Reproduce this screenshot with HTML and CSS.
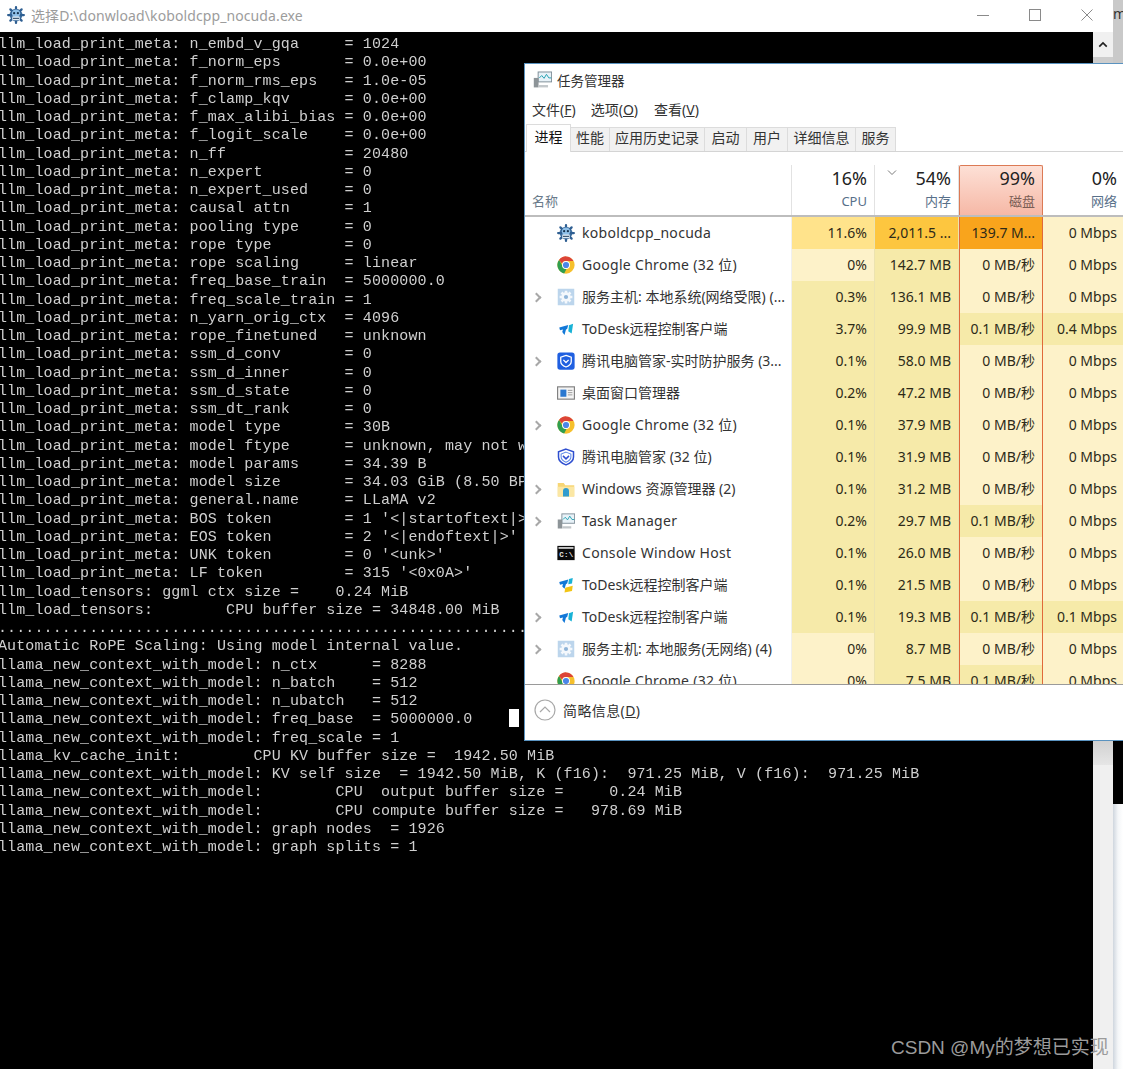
FILE: index.html
```html
<!DOCTYPE html>
<html lang="zh">
<head>
<meta charset="utf-8">
<title>koboldcpp</title>
<link rel="stylesheet" href="styles.css">
</head>
<body>
<svg class="defs" width="0" height="0" aria-hidden="true">
  <symbol id="i-kobold" viewBox="0 0 24 24">
    <circle cx="12" cy="12" r="8.5" fill="#3f6f9f"/>
    <g stroke="#2f5f92" stroke-width="3" stroke-linecap="round"><path d="M12 1.5v21M1.5 12h21M4.5 4.5l15 15M19.500 4.500l-15 15"/></g>
    <circle cx="12" cy="10" r="5.500" fill="#8fc0e8"/>
    <rect x="7" y="14" width="10" height="5" fill="#dfeaf4"/>
    <circle cx="9.500" cy="9.500" r="1.500" fill="#16324f"/><circle cx="14.500" cy="9.500" r="1.500" fill="#16324f"/>
    <path d="M8 16.500h8" stroke="#35506c" stroke-width="1.500"/>
  </symbol>
  <symbol id="i-chrome" viewBox="0 0 24 24">
    <circle cx="12" cy="12" r="11.500" fill="#f6c02c"/>
    <path d="M12 .5A11.500 11.500 0 0 1 22 6.800H12a5.200 5.200 0 0 0-5 3.600L2.700 5.200A11.500 11.500 0 0 1 12 .5z" fill="#dc4437"/>
    <path d="M2.700 5.200 7 12.800a5.200 5.200 0 0 0 5.800 4.300L9.600 23.200A11.500 11.500 0 0 1 2.700 5.200z" fill="#2f9e4f"/>
    <circle cx="12" cy="12" r="5.300" fill="#fff"/>
    <circle cx="12" cy="12" r="4.100" fill="#4a86e8"/>
  </symbol>
  <symbol id="i-gear" viewBox="0 0 24 24">
    <rect x="1" y="1" width="22" height="22" fill="#bcd5ec"/>
    <g stroke="#f4f8fc" stroke-width="3.400"><path d="M12 3.500v17M3.500 12h17M6 6l12 12M18 6 6 18"/></g>
    <circle cx="12" cy="12" r="6.200" fill="#f4f8fc"/>
    <circle cx="12" cy="12" r="2.800" fill="#8fb4d8"/>
  </symbol>
  <symbol id="i-todesk" viewBox="0 0 24 24">
    <path d="M3 10 15 6.500 13.500 12 12 12.500 10 20 7 16 8 12.800 4 13.500z" fill="#1278d8"/>
    <path d="M16 7 21.500 5 19.500 18 15 15z" fill="#18b2d6"/>
  </symbol>
  <symbol id="i-todesk2" viewBox="0 0 24 24">
    <path d="M3 8 15 4.500 13.500 10 12 10.500 10 17 7 14 8 10.800 4 11.500z" fill="#1278d8"/>
    <path d="M16 4 21 2.500 20 10 15 11z" fill="#18b2d6"/>
    <path d="M11 15.500 21 13 20 20 10 22z" fill="#f2c515"/>
  </symbol>
  <symbol id="i-tencent" viewBox="0 0 24 24">
    <rect x="0.500" y="0.500" width="23" height="23" rx="3.500" fill="#1f5fe0"/>
    <path d="M12 4.500 19 7v5.500c0 3.500-3 6-7 7.500-4-1.500-7-4-7-7.500V7z" fill="none" stroke="#fff" stroke-width="1.700"/>
    <path d="M8.500 10.500 12 14l3.500-3.500" fill="none" stroke="#fff" stroke-width="1.800"/>
  </symbol>
  <symbol id="i-shield" viewBox="0 0 24 24">
    <path d="M12 1.500 22 5v7c0 5-4.500 8.500-10 10.500C6.500 20.500 2 17 2 12V5z" fill="#fff" stroke="#2f4fd0" stroke-width="2"/>
    <path d="M12 5.500 18.500 8v4c0 3-3 5.500-6.500 7-3.500-1.500-6.500-4-6.500-7V8z" fill="none" stroke="#5f8be8" stroke-width="1.400"/>
    <path d="M8 10.500l4 4 4-4" fill="none" stroke="#2f4fd0" stroke-width="2"/>
  </symbol>
  <symbol id="i-dwm" viewBox="0 0 24 24">
    <rect x="0.800" y="3.800" width="22.400" height="16.400" fill="#f4f4f4" stroke="#7d7d7d" stroke-width="1.500"/>
    <rect x="4.500" y="7.500" width="8" height="9.500" fill="#2a78d0"/>
    <path d="M14.500 8.500h6M14.500 11.500h6M14.500 14.500h6" stroke="#9a9a9a" stroke-width="1.300"/>
  </symbol>
  <symbol id="i-folder" viewBox="0 0 24 24">
    <path d="M1 4h8l2 3h12v15H1z" fill="#f7d675"/>
    <path d="M1 9h22v13H1z" fill="#fbe7a4"/>
    <path d="M8 22v-7.500a4 4 0 0 1 8 0V22z" fill="#2f9ccf"/>
  </symbol>
  <symbol id="i-task" viewBox="0 0 24 24">
    <rect x="6.500" y="2.500" width="17" height="12.500" fill="#e8f2f8" stroke="#7c8c96" stroke-width="1.200"/>
    <path d="M8 10l3-3 3 3.500 3-5 3 4.500h3" fill="none" stroke="#1f9fb0" stroke-width="1.200"/>
    <rect x="1" y="10" width="6" height="12" fill="#8d9498"/>
    <path d="M7 19h12v3H7z" fill="#c2c7ca"/>
  </symbol>
  <symbol id="i-console" viewBox="0 0 24 24">
    <rect x="0.500" y="2.500" width="23" height="19" fill="#0a0a0a"/>
    <rect x="2" y="4" width="20" height="2.500" fill="#c8c8c8"/>
    <text x="3" y="17" font-family="Liberation Mono, monospace" font-size="10" font-weight="700" fill="#e6e6e6">C:\</text>
  </symbol>
</svg>

<div class="desktop">
  <section class="console-win">
    <header class="titlebar">
      <svg class="title-icon"><use href="#i-kobold"/></svg>
      <span class="title-text">选择D:\donwload\koboldcpp_nocuda.exe</span>
      <div class="controls">
        <svg class="ctl" viewBox="0 0 12 12"><path d="M0 6.500h12" stroke="#8a8a8a" stroke-width="1"/></svg>
        <svg class="ctl" viewBox="0 0 12 12"><rect x=".5" y=".5" width="11" height="11" fill="none" stroke="#8a8a8a"/></svg>
        <svg class="ctl" viewBox="0 0 12 12"><path d="M.5.500l11 11M11.500.500l-11 11" stroke="#8a8a8a"/></svg>
      </div>
    </header>
    <div class="console-body">
<pre class="console">llm_load_print_meta: n_embd_v_gqa     = 1024
llm_load_print_meta: f_norm_eps       = 0.0e+00
llm_load_print_meta: f_norm_rms_eps   = 1.0e-05
llm_load_print_meta: f_clamp_kqv      = 0.0e+00
llm_load_print_meta: f_max_alibi_bias = 0.0e+00
llm_load_print_meta: f_logit_scale    = 0.0e+00
llm_load_print_meta: n_ff             = 20480
llm_load_print_meta: n_expert         = 0
llm_load_print_meta: n_expert_used    = 0
llm_load_print_meta: causal attn      = 1
llm_load_print_meta: pooling type     = 0
llm_load_print_meta: rope type        = 0
llm_load_print_meta: rope scaling     = linear
llm_load_print_meta: freq_base_train  = 5000000.0
llm_load_print_meta: freq_scale_train = 1
llm_load_print_meta: n_yarn_orig_ctx  = 4096
llm_load_print_meta: rope_finetuned   = unknown
llm_load_print_meta: ssm_d_conv       = 0
llm_load_print_meta: ssm_d_inner      = 0
llm_load_print_meta: ssm_d_state      = 0
llm_load_print_meta: ssm_dt_rank      = 0
llm_load_print_meta: model type       = 30B
llm_load_print_meta: model ftype      = unknown, may not work
llm_load_print_meta: model params     = 34.39 B
llm_load_print_meta: model size       = 34.03 GiB (8.50 BPW)
llm_load_print_meta: general.name     = LLaMA v2
llm_load_print_meta: BOS token        = 1 '&lt;|startoftext|&gt;'
llm_load_print_meta: EOS token        = 2 '&lt;|endoftext|&gt;'
llm_load_print_meta: UNK token        = 0 '&lt;unk&gt;'
llm_load_print_meta: LF token         = 315 '&lt;0x0A&gt;'
llm_load_tensors: ggml ctx size =    0.24 MiB
llm_load_tensors:        CPU buffer size = 34848.00 MiB
............................................................
Automatic RoPE Scaling: Using model internal value.
llama_new_context_with_model: n_ctx      = 8288
llama_new_context_with_model: n_batch    = 512
llama_new_context_with_model: n_ubatch   = 512
llama_new_context_with_model: freq_base  = 5000000.0    <span class="cursor"></span>
llama_new_context_with_model: freq_scale = 1
llama_kv_cache_init:        CPU KV buffer size =  1942.50 MiB
llama_new_context_with_model: KV self size  = 1942.50 MiB, K (f16):  971.25 MiB, V (f16):  971.25 MiB
llama_new_context_with_model:        CPU  output buffer size =     0.24 MiB
llama_new_context_with_model:        CPU compute buffer size =   978.69 MiB
llama_new_context_with_model: graph nodes  = 1926
llama_new_context_with_model: graph splits = 1</pre>
      <div class="scrollbar">
        <div class="scroll-btn"><svg viewBox="0 0 12 8" class="scroll-arrow"><path d="M1.500 6.500 6 2l4.500 4.500" fill="none" stroke="#222" stroke-width="2"/></svg></div>
        <div class="scroll-thumb"></div>
      </div>
    </div>
  </section>

  <aside class="strip">
    <div class="strip-top">m</div>
    <div class="strip-dark"></div>
    <div class="strip-light"></div>
  </aside>

  <section class="taskmgr">
    <header class="tm-title"><svg class="tm-icon"><use href="#i-task"/></svg><span>任务管理器</span></header>
    <nav class="tm-menu">
      <span>文件(<u>F</u>)</span><span>选项(<u>O</u>)</span><span>查看(<u>V</u>)</span>
    </nav>
    <nav class="tm-tabs">
      <span class="tab tab-active w-45">进程</span>
      <span class="tab w-39">性能</span>
      <span class="tab w-95">应用历史记录</span>
      <span class="tab w-42">启动</span>
      <span class="tab w-41">用户</span>
      <span class="tab w-68">详细信息</span>
      <span class="tab w-40">服务</span>
    </nav>
    <div class="tm-head grid">
      <div class="hcell hname"><span class="hlabel">名称</span></div>
      <div class="hcell"><span class="hpct">16%</span><span class="hlabel">CPU</span></div>
      <div class="hcell"><svg class="sort" viewBox="0 0 10 5"><path d="M1 .5l4 4 4-4" fill="none" stroke="#7a7a7a"/></svg><span class="hpct">54%</span><span class="hlabel">内存</span></div>
      <div class="hcell hdisk"><span class="hpct">99%</span><span class="hlabel">磁盘</span></div>
      <div class="hcell hnet"><span class="hpct">0%</span><span class="hlabel">网络</span></div>
    </div>
    <div class="tm-rows">
      <div class="row grid">
        <div class="name"><svg class="ico"><use href="#i-kobold"/></svg><span>koboldcpp_nocuda</span></div>
        <div class="c cpu-hi">11.6%</div><div class="c mem-hi">2,011.5 ...</div><div class="c d disk-hi">139.7 M...</div><div class="c lo">0 Mbps</div>
      </div>
      <div class="row grid">
        <div class="name"><svg class="ico"><use href="#i-chrome"/></svg><span>Google Chrome (32 位)</span></div>
        <div class="c lo">0%</div><div class="c mid">142.7 MB</div><div class="c d lo">0 MB/秒</div><div class="c lo">0 Mbps</div>
      </div>
      <div class="row grid">
        <div class="name"><i class="chev"></i><svg class="ico"><use href="#i-gear"/></svg><span class="cjk">服务主机: 本地系统(网络受限) (...</span></div>
        <div class="c mid">0.3%</div><div class="c mid">136.1 MB</div><div class="c d lo">0 MB/秒</div><div class="c lo">0 Mbps</div>
      </div>
      <div class="row grid">
        <div class="name"><svg class="ico"><use href="#i-todesk"/></svg><span class="cjk">ToDesk远程控制客户端</span></div>
        <div class="c mid">3.7%</div><div class="c mid">99.9 MB</div><div class="c d mid">0.1 MB/秒</div><div class="c mid">0.4 Mbps</div>
      </div>
      <div class="row grid">
        <div class="name"><i class="chev"></i><svg class="ico"><use href="#i-tencent"/></svg><span class="cjk">腾讯电脑管家-实时防护服务 (3...</span></div>
        <div class="c mid">0.1%</div><div class="c mid">58.0 MB</div><div class="c d lo">0 MB/秒</div><div class="c lo">0 Mbps</div>
      </div>
      <div class="row grid">
        <div class="name"><svg class="ico"><use href="#i-dwm"/></svg><span class="cjk">桌面窗口管理器</span></div>
        <div class="c mid">0.2%</div><div class="c mid">47.2 MB</div><div class="c d lo">0 MB/秒</div><div class="c lo">0 Mbps</div>
      </div>
      <div class="row grid">
        <div class="name"><i class="chev"></i><svg class="ico"><use href="#i-chrome"/></svg><span>Google Chrome (32 位)</span></div>
        <div class="c mid">0.1%</div><div class="c mid">37.9 MB</div><div class="c d lo">0 MB/秒</div><div class="c lo">0 Mbps</div>
      </div>
      <div class="row grid">
        <div class="name"><svg class="ico"><use href="#i-shield"/></svg><span class="cjk">腾讯电脑管家 (32 位)</span></div>
        <div class="c mid">0.1%</div><div class="c mid">31.9 MB</div><div class="c d lo">0 MB/秒</div><div class="c lo">0 Mbps</div>
      </div>
      <div class="row grid">
        <div class="name"><i class="chev"></i><svg class="ico"><use href="#i-folder"/></svg><span class="cjk">Windows 资源管理器 (2)</span></div>
        <div class="c mid">0.1%</div><div class="c mid">31.2 MB</div><div class="c d lo">0 MB/秒</div><div class="c lo">0 Mbps</div>
      </div>
      <div class="row grid">
        <div class="name"><i class="chev"></i><svg class="ico"><use href="#i-task"/></svg><span>Task Manager</span></div>
        <div class="c mid">0.2%</div><div class="c mid">29.7 MB</div><div class="c d mid">0.1 MB/秒</div><div class="c lo">0 Mbps</div>
      </div>
      <div class="row grid">
        <div class="name"><svg class="ico"><use href="#i-console"/></svg><span>Console Window Host</span></div>
        <div class="c mid">0.1%</div><div class="c mid">26.0 MB</div><div class="c d lo">0 MB/秒</div><div class="c lo">0 Mbps</div>
      </div>
      <div class="row grid">
        <div class="name"><svg class="ico"><use href="#i-todesk2"/></svg><span class="cjk">ToDesk远程控制客户端</span></div>
        <div class="c mid">0.1%</div><div class="c mid">21.5 MB</div><div class="c d lo">0 MB/秒</div><div class="c lo">0 Mbps</div>
      </div>
      <div class="row grid">
        <div class="name"><i class="chev"></i><svg class="ico"><use href="#i-todesk"/></svg><span class="cjk">ToDesk远程控制客户端</span></div>
        <div class="c mid">0.1%</div><div class="c mid">19.3 MB</div><div class="c d mid">0.1 MB/秒</div><div class="c mid">0.1 Mbps</div>
      </div>
      <div class="row grid">
        <div class="name"><i class="chev"></i><svg class="ico"><use href="#i-gear"/></svg><span class="cjk">服务主机: 本地服务(无网络) (4)</span></div>
        <div class="c lo">0%</div><div class="c mid">8.7 MB</div><div class="c d lo">0 MB/秒</div><div class="c lo">0 Mbps</div>
      </div>
      <div class="row grid">
        <div class="name"><svg class="ico"><use href="#i-chrome"/></svg><span>Google Chrome (32 位)</span></div>
        <div class="c lo">0%</div><div class="c mid">7.5 MB</div><div class="c d mid">0.1 MB/秒</div><div class="c lo">0 Mbps</div>
      </div>
    </div>
    <footer class="tm-foot">
      <svg class="foot-ico" viewBox="0 0 22 22"><circle cx="11" cy="11" r="10" fill="none" stroke="#a8a8a8" stroke-width="1.200"/><path d="M6 13l5-5 5 5" fill="none" stroke="#a8a8a8" stroke-width="1.200"/></svg>
      <span>简略信息(<u>D</u>)</span>
    </footer>
  </section>

  <div class="watermark">CSDN @My的梦想已实现</div>
</div>
</body>
</html>
```
FILE: styles.css
```css
* { box-sizing: border-box; }
html, body { margin: 0; padding: 0; height: 100%; background: #fff; overflow: hidden; }
.defs { position: absolute; }
.desktop {
  position: relative;
  display: flex;
  width: 1123px;
  height: 1069px;
  overflow: hidden;
  font-family: "Noto Sans", "Noto Sans CJK SC", sans-serif;
}

/* console window */
.console-win { width: 1113px; flex: none; display: flex; flex-direction: column; background: #000; }
.titlebar { height: 32px; flex: none; display: flex; align-items: center; padding: 0 0 3px 7px; background: #fff; }
.title-icon { width: 18px; height: 18px; flex: none; }
.title-text { margin-left: 6px; font-size: 14px; letter-spacing: .1px; color: #9c9c9c; white-space: nowrap; }
.controls { margin-left: auto; display: flex; gap: 40px; padding-right: 20px; }
.ctl { width: 12px; height: 12px; display: block; }
.console-body { flex: 1; display: flex; min-height: 0; }
.console {
  flex: 1;
  min-width: 0;
  margin: 0;
  padding: 4px 0 0;
  overflow: hidden;
  background: #000;
  color: #cfcfcf;
  font-family: "Liberation Mono", monospace;
  font-size: 15px;
  letter-spacing: .12px;
  line-height: 18.25px;
  white-space: pre;
  transform: translateX(-2px);
  filter: blur(.3px);
}
.cursor { display: inline-block; width: 10px; height: 18px; margin-top: -2px; vertical-align: top; background: #fff; }
.scrollbar { width: 20px; flex: none; display: flex; flex-direction: column; background: #f0f0f0; }
.scroll-btn { height: 25px; flex: none; display: flex; align-items: center; justify-content: center; }
.scroll-arrow { width: 10px; height: 7px; }
.scroll-thumb { height: 708px; flex: none; background: linear-gradient(#cdcdcd 96%, #e6e6e6); }

/* strip of the window behind */
.strip { width: 10px; flex: none; display: flex; flex-direction: column; }
.strip-top { height: 64px; flex: none; padding-top: 5px; background: #c9c9c9; color: #333; font-size: 14px; line-height: 18px; overflow: hidden; }
.strip-dark { height: 740px; flex: none; background: #000; }
.strip-light { flex: 1; background: linear-gradient(90deg, #cfd6de, #f4f6f8 50%, #fff); }

/* task manager */
.taskmgr {
  position: absolute;
  left: 524px;
  top: 63px;
  width: 620px;
  height: 678px;
  display: flex;
  flex-direction: column;
  background: #fff;
  border: 1px solid #5a93c0;
  color: #222;
  font-size: 14px;
}
.tm-title { height: 31px; flex: none; display: flex; align-items: center; padding-left: 8px; font-size: 13.5px; color: #333; }
.tm-icon { width: 19px; height: 19px; margin-right: 5px; }
.tm-menu { height: 29px; flex: none; display: flex; padding: 1px 0 0 7px; font-size: 14px; line-height: 27px; color: #333; }
.tm-menu span { margin-right: 15px; }
.tm-menu span:nth-child(2) { margin-right: 16px; }
.tm-tabs { height: 28px; flex: none; display: flex; align-items: flex-end; padding-left: 1px; border-bottom: 1px solid #d4d4d4; font-size: 14px; }
.tab { height: 24px; padding-bottom: 6px; display: flex; align-items: center; justify-content: center; background: #f1f1f1; border: 1px solid #dcdcdc; border-left: 0; border-bottom: 0; color: #333; }
.tab-active { height: 28px; background: #fff; border-left: 1px solid #dcdcdc; margin-bottom: -1px; padding-bottom: 6px; color: #111; }
.w-45 { width: 45px; } .w-39 { width: 39px; } .w-95 { width: 95px; } .w-42 { width: 42px; }
.w-41 { width: 41px; } .w-68 { width: 68px; } .w-40 { width: 40px; }

.grid { display: grid; grid-template-columns: 267px 83px 84px 84px 100px; }
.tm-head { height: 65px; flex: none; padding-top: 13px; border-bottom: 2px solid #bdbdbd; }
.hcell {
  position: relative;
  display: flex;
  flex-direction: column;
  align-items: flex-end;
  justify-content: flex-end;
  padding: 0 7px 5px 0;
  border-right: 1px solid #e2e2e2;
}
.hname { align-items: flex-start; padding-left: 7px; }
.hdisk { padding-right: 7px; border: 1px solid #dc7a55; border-bottom: 0; border-radius: 2px 2px 0 0; background: linear-gradient(#fde0d6, #f6b8a6); }
.hnet { border-right: 0; padding-right: 26px; }
.hpct { margin-bottom: 1px; font-size: 18px; line-height: 24px; color: #222; }
.hlabel { margin-top: 1px; font-size: 13px; line-height: 18px; color: #58708a; }
.hname .hlabel { color: #6a7a8a; }
.hdisk .hlabel { color: #7a5d55; }
.sort { position: absolute; left: 12px; top: 5px; width: 10px; height: 5px; }

.tm-rows { flex: 1; min-height: 0; overflow: hidden; }
.row { height: 32px; }
.name { position: relative; display: flex; align-items: center; padding-left: 32px; padding-bottom: 2px; border-right: 1px solid #f0f0f0; white-space: nowrap; overflow: hidden; font-size: 14px; letter-spacing: .3px; color: #333; }
.cjk { letter-spacing: 0; }
.ico { width: 18px; height: 18px; flex: none; margin-right: 7px; margin-top: 2px; }
.chev { position: absolute; left: 7.5px; top: 12.5px; width: 7px; height: 7px; border-top: 2px solid #a8a8a8; border-right: 2px solid #a8a8a8; transform: rotate(45deg); }
.c { display: flex; align-items: center; justify-content: flex-end; padding: 0 7px 2px 0; font-size: 14px; color: #2d2a18; white-space: nowrap; border-right: 1px solid #ece3b0; }
.row .c:last-child { padding-right: 26px; border-right: 0; }
.lo { background: #fdf2c9; }
.mid { background: #f6eaa9; }
.cpu-hi { background: #ffe38b; }
.mem-hi { background: #fdc63f; }
.disk-hi { background: #f9a41c; }
.d { border-left: 1px solid #e0693a; border-right: 1px solid #e0693a; }

.tm-foot { height: 56px; flex: none; display: flex; align-items: center; padding: 0 0 5px 9px; background: #fff; border-top: 1px solid #9a9a9a; font-size: 14px; letter-spacing: .4px; color: #333; }
.foot-ico { width: 22px; height: 22px; margin-right: 7px; }

.watermark {
  position: absolute;
  left: 891px;
  top: 1035px;
  font-family: "Liberation Sans", "Noto Sans CJK SC", sans-serif;
  font-size: 19px;
  line-height: 26px;
  color: #9b9b9b;
  white-space: nowrap;
}
```
